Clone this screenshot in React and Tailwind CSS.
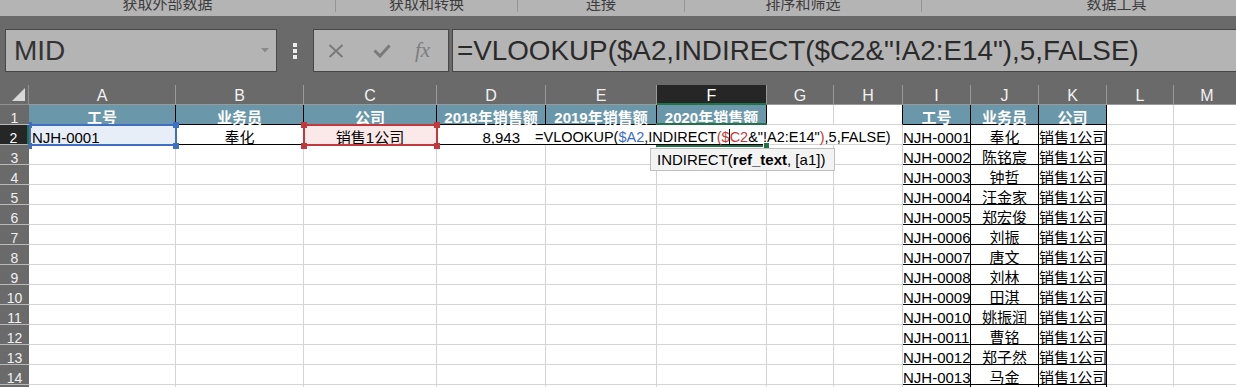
import React from 'react';

const people = [
  ['NJH-0001', '奉化'],
  ['NJH-0002', '陈铭宸'],
  ['NJH-0003', '钟哲'],
  ['NJH-0004', '汪金家'],
  ['NJH-0005', '郑宏俊'],
  ['NJH-0006', '刘振'],
  ['NJH-0007', '唐文'],
  ['NJH-0008', '刘林'],
  ['NJH-0009', '田淇'],
  ['NJH-0010', '姚振润'],
  ['NJH-0011', '曹铭'],
  ['NJH-0012', '郑子然'],
  ['NJH-0013', '马金'],
  ['', ''],
];

const letters = ['A', 'B', 'C', 'D', 'E', 'F', 'G', 'H', 'I', 'J', 'K', 'L', 'M', ''];

const base = 'h-5 text-[15px] leading-5 pt-[3px] whitespace-nowrap text-black';
const grid = `${base} bg-white border-r border-b border-[#d4d4d4]`;
const boxed = `${base} bg-white border-r border-b border-black`;
const title = `${base} bg-[#6a97aa] border-r border-b border-black text-white font-bold text-center`;

function RibbonLabels() {
  const groups = [
    ['获取外部数据', 'w-[336px]'],
    ['获取和转换', 'w-[182px]'],
    ['连接', 'w-[167px]'],
    ['排序和筛选', 'w-[237px]'],
    ['数据工具', 'w-[390px]'],
  ];
  return (
    <div className="h-4 bg-[#b4b4b4] flex overflow-hidden">
      {groups.map(([label, w]) => (
        <div key={label} className={`${w} shrink-0 flex`}>
          <div className="flex-1 text-center text-[15px] leading-4 -translate-y-[4px] text-[#3c3c3c]">{label}</div>
          <div className="w-px h-3 bg-[#959595]" />
        </div>
      ))}
    </div>
  );
}

function FormulaBar() {
  return (
    <div className="h-[69px] flex items-start pt-[13px]">
      {/* name box */}
      <div className="ml-[5px] w-[272px] h-[43px] shrink-0 border border-[#474747] bg-[#b4b4b4] flex items-center pl-[8px] relative">
        <span className="text-[28px] text-[#333]">MID</span>
        <svg className="absolute left-[255px] top-[18px]" width="8" height="5" viewBox="0 0 8 5">
          <path d="M0 0 L8 0 L4 4.5 Z" fill="#8a8a8a" />
        </svg>
      </div>
      <div className="ml-[16px] h-[43px] flex flex-col justify-center gap-[2px]">
        <div className="w-[4px] h-[4px] bg-[#ececec]" />
        <div className="w-[4px] h-[4px] bg-[#ececec]" />
        <div className="w-[4px] h-[4px] bg-[#ececec]" />
      </div>
      {/* cancel / enter / fx */}
      <div className="ml-[16px] w-[136px] h-[43px] shrink-0 border border-[#474747] bg-[#b4b4b4] flex items-center">
        <svg className="ml-[14px]" width="16" height="14" viewBox="0 0 16 14">
          <path d="M1.5 1 L14.5 13 M14.5 1 L1.5 13" stroke="#7a7a7a" strokeWidth="2" />
        </svg>
        <svg className="ml-[29px]" width="18" height="14" viewBox="0 0 18 14">
          <path d="M1.5 6.5 L7 12 L16.5 1.5" stroke="#7a7a7a" strokeWidth="3" fill="none" />
        </svg>
        <span className="ml-[24px] font-['Liberation_Serif',serif] italic text-[21px] text-[#7d7d7d] leading-none">fx</span>
      </div>
      {/* formula input */}
      <div className="ml-[3px] w-[820px] shrink-0 h-[43px] border border-[#474747] bg-[#b4b4b4] flex items-center pl-[4px] whitespace-nowrap">
        <span className="text-[27.8px] text-[#2a2a2a]">=VLOOKUP($A2,INDIRECT($C2&amp;&quot;!A2:E14&quot;),5,FALSE)</span>
      </div>
    </div>
  );
}

function HeaderRow() {
  return (
    <>
      <div className="h-5 bg-[#6a6a6a] border-r border-b border-[#8f8f8f] relative">
        <div className="absolute right-[3px] bottom-[3px] w-0 h-0 border-l-[13px] border-l-transparent border-b-[13px] border-b-[#d8d8d8]" />
      </div>
      {letters.map((l, i) =>
        l === 'F' ? (
          <div key={i} className="h-5 bg-[#262626] border-r border-[#9a9a9a] border-b-2 border-b-[#217346] text-[16px] leading-5 pt-px text-center text-white">
            F
          </div>
        ) : (
          <div key={i} className="h-5 bg-[#6a6a6a] border-r border-b border-[#9a9a9a] text-[16px] leading-5 pt-px text-center text-[#f2f2f2]">
            {l}
          </div>
        )
      )}
    </>
  );
}

function RowHead({ n }) {
  if (n === 2) {
    return (
      <div className="h-5 bg-[#262626] border-b border-[#b9b9b9] border-r-2 border-r-[#217346] text-[14px] leading-5 pt-[3px] text-center text-white">
        2
      </div>
    );
  }
  return (
    <div className="h-5 bg-[#6a6a6a] border-b border-[#b9b9b9] text-[14px] leading-5 pt-[3px] text-center text-[#f0f0f0]">
      {n}
    </div>
  );
}

function PeopleCells({ p }) {
  return (
    <>
      <div className={`${boxed} pl-0`}>{p[0]}</div>
      <div className={`${boxed} text-center`}>{p[1]}</div>
      <div className={boxed}>{p[0] ? '销售1公司' : ''}</div>
    </>
  );
}

function Sheet() {
  const rows = [];
  // row 1
  rows.push(
    <React.Fragment key={1}>
      <RowHead n={1} />
      <div className={title}>工号</div>
      <div className={title}>业务员</div>
      <div className={title}>公司</div>
      <div className={title}>2018年销售额</div>
      <div className={title}>2019年销售额</div>
      <div className={title}>2020年销售额</div>
      <div className={grid} />
      <div className={`${grid} border-r-black`} />
      <div className={title}>工号</div>
      <div className={title}>业务员</div>
      <div className={title}>公司</div>
      <div className={grid} />
      <div className={grid} />
      <div className={grid} />
    </React.Fragment>
  );
  // row 2
  rows.push(
    <React.Fragment key={2}>
      <RowHead n={2} />
      <div className={`${base} bg-[#e8eef8] border-r border-b border-black pl-[3px]`}>NJH-0001</div>
      <div className={`${boxed} text-center`}>奉化</div>
      <div className={`${base} bg-[#fbe8e8] border-r border-b border-black text-center`}>销售1公司</div>
      <div className={`${boxed} text-right pr-[25px]`}>8,943</div>
      <div className={boxed} />
      <div className={boxed} />
      <div className={grid} />
      <div className={grid} />
      <PeopleCells p={people[0]} />
      <div className={grid} />
      <div className={grid} />
      <div className={grid} />
    </React.Fragment>
  );
  for (let n = 3; n <= 15; n++) {
    rows.push(
      <React.Fragment key={n}>
        <RowHead n={n} />
        <div className={grid} />
        <div className={grid} />
        <div className={grid} />
        <div className={grid} />
        <div className={grid} />
        <div className={grid} />
        <div className={grid} />
        <div className={grid} />
        <PeopleCells p={people[n - 2]} />
        <div className={grid} />
        <div className={grid} />
        <div className={grid} />
      </React.Fragment>
    );
  }

  return (
    <div className="relative grid grid-cols-[29px_147px_128px_133px_109px_111px_110px_67px_69px_68px_68px_68px_67px_67px_1fr] auto-rows-[20px]">
      <HeaderRow />
      {rows}

      {/* $A2 reference highlight */}
      <div className="absolute left-[29px] top-[39px] w-[148px] h-[22px] border-2 border-[#3f6fc5]" />
      <div className="absolute left-[29px] top-[37px] w-[3px] h-[6px] bg-[#3f6fc5]" />
      <div className="absolute left-[173px] top-[37px] w-[6px] h-[6px] bg-[#3f6fc5]" />
      <div className="absolute left-[29px] top-[58px] w-[3px] h-[6px] bg-[#3f6fc5]" />
      <div className="absolute left-[173px] top-[58px] w-[6px] h-[6px] bg-[#3f6fc5]" />

      {/* $C2 reference highlight */}
      <div className="absolute left-[303px] top-[39px] w-[135px] h-[22px] border-2 border-[#c3383c]" />
      <div className="absolute left-[301px] top-[37px] w-[6px] h-[6px] bg-[#c3383c]" />
      <div className="absolute left-[434px] top-[37px] w-[6px] h-[6px] bg-[#c3383c]" />
      <div className="absolute left-[301px] top-[58px] w-[6px] h-[6px] bg-[#c3383c]" />
      <div className="absolute left-[434px] top-[58px] w-[6px] h-[6px] bg-[#c3383c]" />

      {/* in-cell editor for F2 */}
      <div className="absolute left-[528px] top-[40px] w-[367px] h-[19px] bg-white text-[14.5px] leading-5 pt-[2px] pl-[7px] whitespace-nowrap text-black">
        =VLOOKUP(<span className="text-[#3a6bc8]">$A2</span>,INDIRECT<span className="text-[#c3383c]">(</span>
        <span className="relative text-[#c3383c]">
          $<span className="absolute right-0 top-[0px] w-px h-[17px] bg-black" />
        </span>
        <span className="text-[#c3383c]">C2</span>&amp;&quot;!A2:E14&quot;<span className="text-[#c3383c]">)</span>,5,FALSE)
      </div>
      <div className="absolute left-[656px] top-[38px] w-[111px] h-[2px] bg-[#217346]" />
      <div className="absolute left-[656px] top-[60px] w-[109px] h-[2px] bg-[#217346]" />
      <div className="absolute left-[764px] top-[58px] w-[5px] h-[5px] bg-[#217346] outline outline-1 outline-white" />

      {/* function tooltip */}
      <div className="absolute left-[650px] top-[63px] w-[185px] h-[23px] bg-[#f3f3f3] border border-[#bfbfbf] text-[15px] leading-[21px] pl-[6px] whitespace-nowrap text-black">
        INDIRECT(<span className="font-bold">ref_text</span>, [a1])
      </div>
    </div>
  );
}

export default function App() {
  return (
    <div className="w-[1236px] h-[387px] overflow-hidden bg-[#6a6a6a] font-['Liberation_Sans','Noto_Sans_CJK_SC',sans-serif]">
      <RibbonLabels />
      <FormulaBar />
      <Sheet />
    </div>
  );
}
